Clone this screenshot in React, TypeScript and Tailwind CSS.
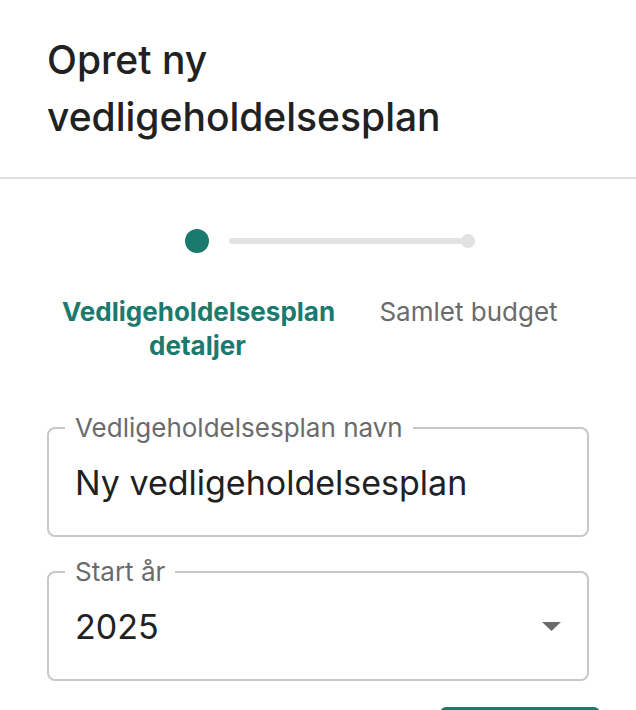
export default function App() {
  return (
    <div className="min-h-screen bg-white font-['Inter',sans-serif] text-[#212121]">
      <div className="px-[47px] pt-[31px] pb-[32px]">
        <h2 className="text-[39px] leading-[57px] font-medium">Opret ny vedligeholdelsesplan</h2>
      </div>
      <div className="h-[2px] bg-[#e0e0e0]" />

      <div className="pt-[50px]">
        <div className="flex items-center pl-[185px] pr-[161px]">
          <div className="w-6 h-6 rounded-full bg-[#1a7a6d] shrink-0" />
          <div className="ml-5 flex-1 h-1.5 rounded-full bg-[#e2e2e2]" />
          <div className="-ml-1 w-3.5 h-3.5 rounded-full bg-[#e2e2e2] shrink-0" />
        </div>
        <div className="mt-[42px] ml-[62px] w-[542px] grid grid-cols-2 text-[26px] leading-[34px]">
          <div className="text-center font-bold text-[#1a7a6d]">Vedligeholdelsesplan detaljer</div>
          <div className="text-center text-[#6b6b6b]">Samlet budget</div>
        </div>
      </div>

      <div className="px-[47px] pt-[64px] flex flex-col gap-[34px]">
        <div className="relative h-[110px] rounded-lg border-2 border-[#c8c8c8] flex items-center px-[26px]">
          <span className="absolute -top-[16px] left-[16px] bg-white px-[10px] text-[26px] leading-[30px] text-[#6b6b6b]">
            Vedligeholdelsesplan navn
          </span>
          <span className="text-[34px] text-[#212121]">Ny vedligeholdelsesplan</span>
        </div>

        <div className="relative h-[110px] rounded-lg border-2 border-[#c8c8c8] flex items-center px-[26px]">
          <span className="absolute -top-[16px] left-[16px] bg-white px-[10px] text-[26px] leading-[30px] text-[#6b6b6b]">
            Start år
          </span>
          <span className="flex-1 text-[34px] text-[#212121]">2025</span>
          <svg width="19" height="9" viewBox="0 0 19 9">
            <path d="M0 0h19L9.5 9z" fill="#6b6b6b" />
          </svg>
        </div>
      </div>

      <div className="flex justify-end pr-[36px] pt-[26px]">
        <button className="w-[160px] h-[56px] rounded-md bg-[#1a7a6d] text-white text-[22px] font-semibold">
          Næste
        </button>
      </div>
    </div>
  );
}
